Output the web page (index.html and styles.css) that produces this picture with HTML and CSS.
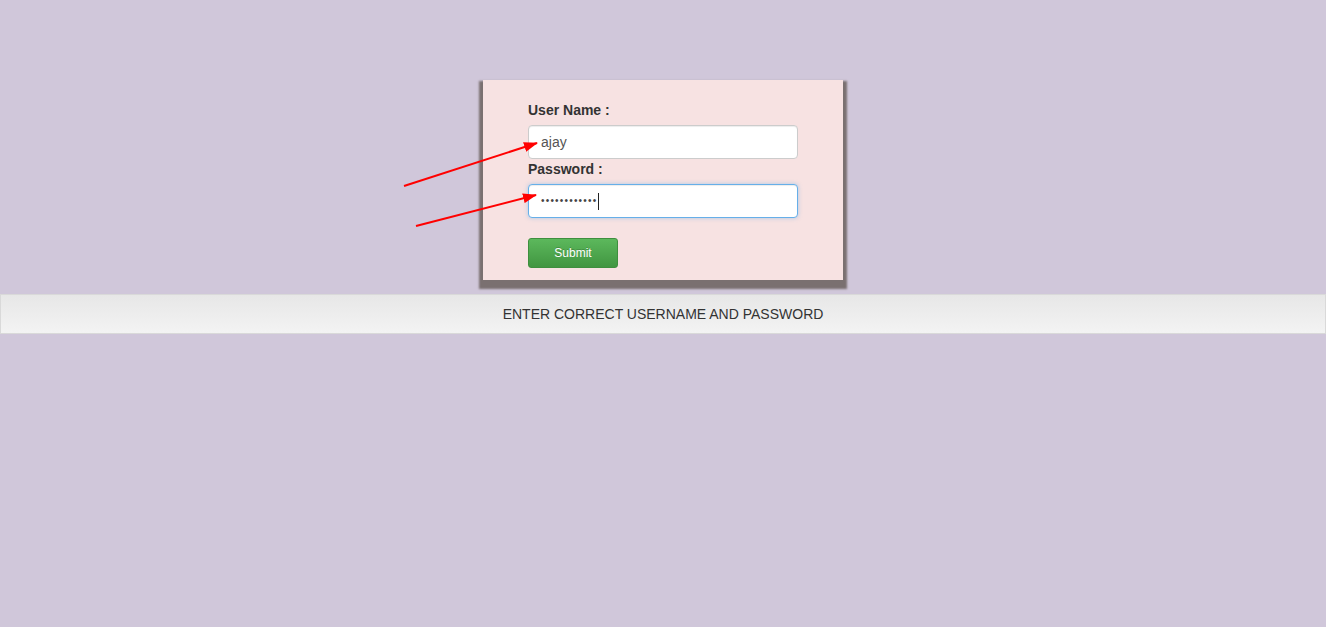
FILE: index.html
```html
<!DOCTYPE html>
<html>
<head>
<meta charset="utf-8">
<link rel="stylesheet" href="styles.css">
</head>
<body>
<div class="page">
  <form class="card">
    <label class="lbl" for="user">User Name :</label>
    <input class="field" id="user" type="text" value="ajay">
    <label class="lbl" for="pass">Password :</label>
    <div class="field focus" id="pass"><span class="dots">••••••••••••</span><span class="caret"></span></div>
    <button class="btn" type="button">Submit</button>
  </form>
  <div class="bar">ENTER CORRECT USERNAME AND PASSWORD</div>
</div>
<svg class="arrows" width="1326" height="627" viewBox="0 0 1326 627">
  <defs>
    <marker id="ah2" markerWidth="14" markerHeight="10" refX="13" refY="5" orient="auto" markerUnits="userSpaceOnUse">
      <path d="M0,0 L14,5 L0,10 z" fill="#ff0000"/>
    </marker>
  </defs>
  <line x1="404" y1="186" x2="537" y2="143" stroke="#ff0000" stroke-width="2" marker-end="url(#ah2)"/>
  <line x1="416" y1="226" x2="536" y2="195" stroke="#ff0000" stroke-width="2" marker-end="url(#ah2)"/>
</svg>
</body>
</html>
```
FILE: styles.css
```css
html, body {
  margin: 0;
  padding: 0;
  height: 100%;
}
body {
  background: #d0c7da;
  font-family: "Liberation Sans", Arial, sans-serif;
  font-size: 14px;
  color: #333;
  position: relative;
}
.page {
  display: flex;
  flex-direction: column;
  align-items: center;
  padding-top: 80px;
}
.card {
  width: 360px;
  box-sizing: border-box;
  background: #f7e2e2;
  padding: 20px 45px 12px 45px;
  display: flex;
  flex-direction: column;
  align-items: flex-start;
  box-shadow: 0 5px 2px 4px #7a7070;
}
.lbl {
  font-weight: bold;
  line-height: 20px;
  margin-bottom: 5px;
  color: #333;
}
.field {
  width: 270px;
  height: 34px;
  box-sizing: border-box;
  border: 1px solid #ccc;
  border-radius: 4px;
  background: #fff;
  padding: 6px 12px;
  font-family: "Liberation Sans", Arial, sans-serif;
  font-size: 14px;
  color: #555;
  box-shadow: inset 0 1px 1px rgba(0,0,0,.075);
  outline: none;
  margin: 0;
}
.focus {
  border-color: #66afe9;
  box-shadow: inset 0 1px 1px rgba(0,0,0,.075), 0 0 4px rgba(102,175,233,.5);
  display: flex;
  align-items: center;
  margin-bottom: 20px;
}
.dots {
  font-size: 10px;
  letter-spacing: 1.2px;
  color: #444;
  line-height: 1;
}
.caret {
  display: inline-block;
  width: 1px;
  height: 17px;
  background: #222;
  margin-left: 1px;
}
.btn {
  width: 90px;
  height: 30px;
  border: 1px solid #3e8f3e;
  border-radius: 3px;
  background: linear-gradient(to bottom, #5cb85c, #419641);
  color: #fff;
  font-family: "Liberation Sans", Arial, sans-serif;
  font-size: 12px;
  padding: 0;
  text-shadow: 0 -1px 0 rgba(0,0,0,.2);
}
.bar {
  align-self: stretch;
  margin-top: 14px;
  height: 40px;
  box-sizing: border-box;
  border: 1px solid #d9d9d9;
  background: linear-gradient(to bottom, #e7e7e7, #f3f3f3);
  display: flex;
  align-items: center;
  justify-content: center;
  font-size: 14px;
  color: #333;
}
.arrows {
  position: absolute;
  left: 0;
  top: 0;
  pointer-events: none;
}
```
